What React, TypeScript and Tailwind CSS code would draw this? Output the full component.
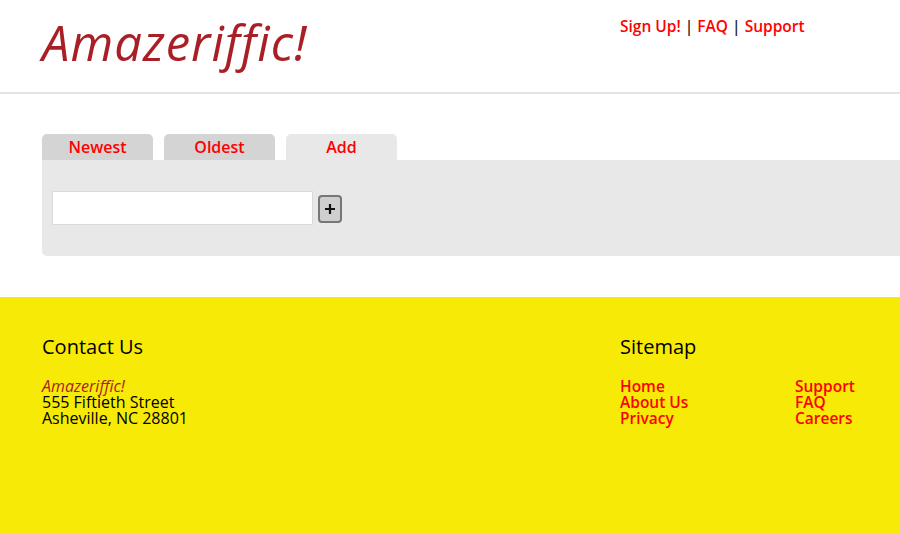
export default function App() {
  const open = { fontFamily: '"Open Sans", "Noto Sans", sans-serif' }
  return (
    <div className="min-h-[534px] bg-white flex flex-col" style={open}>
      <header className="h-[94px] border-b-2 border-[#e3e3e3] flex">
        <div className="w-[620px] pl-[42px] pt-[12px]">
          <h1 className="text-[49px] leading-[60px] italic text-[#a91f26] tracking-[1px]">Amazeriffic!</h1>
        </div>
        <nav className="pt-[15px] text-[15.5px] font-semibold leading-[22px] text-[#222]">
          <a className="text-[#ff0000]">Sign Up!</a> | <a className="text-[#ff0000]">FAQ</a> |{' '}
          <a className="text-[#ff0000]">Support</a>
        </nav>
      </header>

      <main className="pl-[42px] pt-[40px] pb-[41px]">
        <div className="flex gap-[11px]">
          {['Newest', 'Oldest', 'Add'].map((t) => (
            <div
              key={t}
              className={
                'w-[111px] h-[26px] rounded-t-[5px] text-center text-[16px] font-semibold leading-[26px] text-[#ff0000] ' +
                (t === 'Add' ? 'bg-[#e8e8e8]' : 'bg-[#d4d4d4]')
              }
            >
              {t}
            </div>
          ))}
        </div>
        <div className="h-[96px] bg-[#e8e8e8] rounded-bl-[5px] pl-[10px] pt-[31px] flex items-start gap-[5px]">
          <input className="w-[261px] h-[34px] bg-white border border-[#dadada] outline-none" />
          <button className="mt-[4px] w-[24px] h-[28px] rounded-[4px] border-2 border-[#777] bg-[#cfcfcf] flex items-center justify-center">
            <svg width="12" height="12" viewBox="0 0 12 12">
              <path d="M6 1v10M1 6h10" stroke="#111" strokeWidth="2.2" />
            </svg>
          </button>
        </div>
      </main>

      <footer className="flex-1 bg-[#f7ea07] flex pt-[37px]">
        <div className="w-[620px] pl-[42px]">
          <h2 className="text-[20px] leading-[26px] text-black">Contact Us</h2>
          <div className="mt-[18px] text-[16px] leading-[16px] text-black">
            <div className="italic text-[#a91f26]">Amazeriffic!</div>
            <div>555 Fiftieth Street</div>
            <div>Asheville, NC 28801</div>
          </div>
        </div>
        <div>
          <h2 className="text-[20px] leading-[26px] text-black">Sitemap</h2>
          <div className="mt-[18px] flex text-[15.5px] leading-[16px] font-semibold text-[#ff0000]">
            <div className="w-[175px] flex flex-col">
              <a>Home</a>
              <a>About Us</a>
              <a>Privacy</a>
            </div>
            <div className="flex flex-col">
              <a>Support</a>
              <a>FAQ</a>
              <a>Careers</a>
            </div>
          </div>
        </div>
      </footer>
    </div>
  )
}
